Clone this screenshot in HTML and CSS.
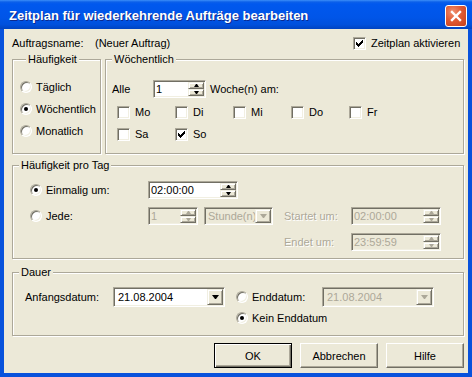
FILE: index.html
```html
<!doctype html>
<html lang="de">
	<head>
		<meta charset="utf-8" />
		<title>Zeitplan für wiederkehrende Aufträge bearbeiten</title>
		<link rel="stylesheet" href="styles.css">
	</head>

	<body>
		<div class="window">
			<div class="titlebar">
				<span class="title">Zeitplan für wiederkehrende Aufträge bearbeiten</span>
				<a class="close-button">
					<svg width="12" height="12" viewBox="0 0 12 12"><path d="M2 2 L10 10 M10 2 L2 10" stroke="#fff" stroke-width="2.4" stroke-linecap="square" /></svg>
				</a>
			</div>

			<div class="client">
				<!-- Kopfzeile -->
				<div class="top-row">
					<span class="job-label">Auftragsname:</span>
					<span class="job-name">(Neuer Auftrag)</span>
					<label class="check">
						<span class="box"><svg width="7" height="7" viewBox="0 0 7 7"><path d="M0 2h1v1h1v1h1v-1h1v-1h1v-1h1v-1h1v3h-1v1h-1v1h-1v1h-1v1h-1v-1h-1v-1h-1z" /></svg></span>
						Zeitplan aktivieren
					</label>
				</div>

				<!-- Häufigkeit / Wöchentlich -->
				<div class="group-row">
					<div class="group frequency">
						<span class="group-title">Häufigkeit</span>
						<div class="radio-list">
							<label class="option"><span class="radio"></span>Täglich</label>
							<label class="option"><span class="radio checked"></span>Wöchentlich</label>
							<label class="option"><span class="radio"></span>Monatlich</label>
						</div>
					</div>

					<div class="group weekly">
						<span class="group-title">Wöchentlich</span>
						<div class="every-row">
							<span class="every-label">Alle</span>
							<span class="field spin week-spin">
								<span class="field-value">1</span>
								<span class="spin-buttons"><span class="raised arrow-up"></span><span class="raised arrow-down"></span></span>
							</span>
							<span class="every-suffix">Woche(n) am:</span>
						</div>
						<div class="day-grid">
							<label class="check"><span class="box"></span>Mo</label>
							<label class="check"><span class="box"></span>Di</label>
							<label class="check"><span class="box"></span>Mi</label>
							<label class="check"><span class="box"></span>Do</label>
							<label class="check"><span class="box"></span>Fr</label>
							<label class="check"><span class="box"></span>Sa</label>
							<label class="check">
								<span class="box"><svg width="7" height="7" viewBox="0 0 7 7"><path d="M0 2h1v1h1v1h1v-1h1v-1h1v-1h1v-1h1v3h-1v1h-1v1h-1v1h-1v1h-1v-1h-1v-1h-1z" /></svg></span>
								So
							</label>
						</div>
					</div>
				</div>

				<!-- Häufigkeit pro Tag -->
				<div class="group daily">
					<span class="group-title">Häufigkeit pro Tag</span>
					<div class="daily-row">
						<label class="option daily-option"><span class="radio checked"></span>Einmalig um:</label>
						<span class="field spin time-field">
							<span class="field-value">02:00:00</span>
							<span class="spin-buttons"><span class="raised arrow-up"></span><span class="raised arrow-down"></span></span>
						</span>
					</div>
					<div class="daily-row">
						<label class="option daily-option"><span class="radio"></span>Jede:</label>
						<span class="field spin disabled count-spin">
							<span class="field-value">1</span>
							<span class="spin-buttons"><span class="raised arrow-up"></span><span class="raised arrow-down"></span></span>
						</span>
						<span class="field combo disabled unit-combo">
							<span class="field-value">Stunde(n)</span>
							<span class="raised combo-button"></span>
						</span>
						<span class="time-label disabled-text">Startet um:</span>
						<span class="field spin disabled time-field">
							<span class="field-value">02:00:00</span>
							<span class="spin-buttons"><span class="raised arrow-up"></span><span class="raised arrow-down"></span></span>
						</span>
					</div>
					<div class="daily-row end-row">
						<span class="time-label disabled-text">Endet um:</span>
						<span class="field spin disabled time-field">
							<span class="field-value">23:59:59</span>
							<span class="spin-buttons"><span class="raised arrow-up"></span><span class="raised arrow-down"></span></span>
						</span>
					</div>
				</div>

				<!-- Dauer -->
				<div class="group duration">
					<span class="group-title">Dauer</span>
					<div class="duration-row">
						<span class="start-label">Anfangsdatum:</span>
						<span class="field combo date-combo">
							<span class="field-value">21.08.2004</span>
							<span class="raised combo-button"></span>
						</span>
						<label class="option end-option"><span class="radio"></span>Enddatum:</label>
						<span class="field combo disabled date-combo">
							<span class="field-value">21.08.2004</span>
							<span class="raised combo-button"></span>
						</span>
					</div>
					<div class="duration-row no-end-row">
						<label class="option"><span class="radio checked"></span>Kein Enddatum</label>
					</div>
				</div>

				<!-- Schaltflächen -->
				<div class="button-row">
					<button class="button default">OK</button>
					<button class="button">Abbrechen</button>
					<button class="button">Hilfe</button>
				</div>
			</div>
		</div>
	</body>
</html>
```

FILE: styles.css
```css
/* Allgemein */

body {
	margin: 0;
	font-family: "Liberation Sans", Arial, sans-serif;
	font-size: 11px;
	line-height: 14px;
	color: #000;
	background: #fff;
}

label {
	cursor: default;
}

.window {
	width: 472px;
	height: 377px;
	display: flex;
	flex-direction: column;
}

/* Titelleiste */

.titlebar {
	flex: none;
	height: 29px;
	box-sizing: border-box;
	display: flex;
	align-items: center;
	justify-content: space-between;
	padding: 2px 5px 0 9px;
	background: linear-gradient(to bottom, #3c8ef8 0, #0b5fe9 2px, #0058ee 4px, #0055e8 60%, #0050dc 85%, #0043c0 100%);
}

.title {
	color: #fff;
	font-size: 13px;
	font-weight: bold;
	text-shadow: 1px 1px #0c2a8f;
}

.close-button {
	display: flex;
	align-items: center;
	justify-content: center;
	width: 22px;
	height: 22px;
	box-sizing: border-box;
	border: 1px solid #fff;
	border-radius: 3px;
	background: radial-gradient(circle at 35% 30%, #f09272 0, #e05a34 45%, #c63f1b 100%);
}

/* Fensterinhalt */

.client {
	flex: 1;
	box-sizing: border-box;
	background: #ece9d8;
	border: 0 solid #0852dc;
	border-width: 0 4px 4px;
	padding: 7px 4px 0 8px;
}

.top-row {
	display: flex;
	align-items: center;
	height: 14px;
}

.job-label {
	width: 83px;
}

.job-name {
	width: 258px;
}

/* Gruppenrahmen (geätzte Linie) */

.group {
	box-sizing: border-box;
	display: flex;
	flex-direction: column;
	align-items: flex-start;
	border: 1px solid #aca899;
	box-shadow: inset 1px 1px #fff, 1px 1px #fff;
}

.group-title {
	margin: -8px 0 0 6px;
	padding: 0 2px;
	background: #ece9d8;
}

.group-row {
	display: flex;
	gap: 4px;
	margin-top: 9px;
	height: 95px;
}

.frequency {
	width: 89px;
	padding-left: 7px;
}

.weekly {
	flex: 1;
}

.radio-list {
	display: flex;
	flex-direction: column;
	gap: 8px;
	margin-top: 14px;
}

/* Optionsfelder und Kontrollkästchen */

.option,
.check {
	display: flex;
	align-items: center;
	height: 14px;
	white-space: nowrap;
}

.radio {
	flex: none;
	display: flex;
	align-items: center;
	justify-content: center;
	width: 12px;
	height: 12px;
	box-sizing: border-box;
	margin-right: 4px;
	border-radius: 50%;
	border: 1px solid;
	border-color: #aca899 #fff #fff #aca899;
	box-shadow: inset 1px 1px #716f64, inset -1px -1px #f1efe2;
	background: #fff;
}

.radio.checked::after {
	content: "";
	width: 4px;
	height: 4px;
	border-radius: 50%;
	background: #000;
}

.box {
	flex: none;
	display: flex;
	align-items: center;
	justify-content: center;
	width: 13px;
	height: 13px;
	box-sizing: border-box;
	margin-right: 5px;
	border: 1px solid;
	border-color: #aca899 #fff #fff #aca899;
	box-shadow: inset 1px 1px #716f64, inset -1px -1px #f1efe2;
	background: #fff;
}

.box svg {
	fill: #000;
}

/* Wöchentlich */

.every-row {
	display: flex;
	align-items: center;
	margin-top: 14px;
	padding-left: 6px;
}

.every-label {
	width: 41px;
}

.week-spin {
	width: 53px;
}

.every-suffix {
	margin-left: 4px;
}

.day-grid {
	display: grid;
	grid-template-columns: repeat(5, 58px);
	row-gap: 8px;
	margin-top: 7px;
	padding-left: 11px;
}

/* Eingabefelder */

.field {
	display: flex;
	height: 18px;
	box-sizing: border-box;
	padding: 1px;
	border: 1px solid;
	border-color: #aca899 #fff #fff #aca899;
	box-shadow: inset 1px 1px #716f64, inset -1px -1px #f1efe2;
	background: #fff;
}

.field-value {
	flex: 1;
	padding-left: 1px;
	line-height: 14px;
	overflow: hidden;
	white-space: nowrap;
}

.field.disabled {
	background: #ece9d8;
	color: #aca899;
}

.raised {
	box-sizing: border-box;
	display: flex;
	align-items: center;
	justify-content: center;
	border: 1px solid;
	border-color: #f1efe2 #716f64 #716f64 #f1efe2;
	box-shadow: inset 1px 1px #fff, inset -1px -1px #aca899;
	background: #ece9d8;
}

.spin-buttons {
	display: flex;
	flex-direction: column;
	width: 16px;
}

.spin-buttons .raised {
	flex: 1;
}

.arrow-up::after,
.arrow-down::after {
	content: "";
	width: 1px;
	border-left: 2px solid transparent;
	border-right: 2px solid transparent;
}

.arrow-up::after {
	border-bottom: 3px solid #000;
}

.arrow-down::after {
	border-top: 3px solid #000;
}

.combo-button {
	width: 16px;
}

.combo-button::after {
	content: "";
	width: 1px;
	border-left: 3px solid transparent;
	border-right: 3px solid transparent;
	border-top: 4px solid #000;
}

.disabled .arrow-up::after {
	border-bottom-color: #aca899;
}

.disabled .arrow-down::after,
.disabled .combo-button::after {
	border-top-color: #aca899;
}

.disabled-text {
	color: #aca899;
	text-shadow: 1px 1px #fff;
}

/* Häufigkeit pro Tag */

.daily {
	margin-top: 11px;
	height: 94px;
	padding-left: 17px;
}

.daily .group-title {
	margin-left: -11px;
}

.daily-row {
	display: flex;
	align-items: center;
	margin-top: 8px;
}

.daily-row:first-of-type {
	margin-top: 9px;
}

.daily-option {
	width: 118px;
}

.time-field {
	width: 90px;
}

.count-spin {
	width: 50px;
}

.unit-combo {
	width: 69px;
	margin-left: 6px;
}

.unit-combo .field-value {
	padding-left: 2px;
}

.time-label {
	width: 67px;
	margin-left: 11px;
}

.end-row {
	padding-left: 243px;
}

/* Dauer */

.duration {
	margin-top: 13px;
	height: 64px;
	padding-left: 12px;
}

.duration .group-title {
	margin-left: -6px;
}

.duration-row {
	display: flex;
	align-items: center;
	margin-top: 8px;
}

.no-end-row {
	margin-top: 4px;
	padding-left: 211px;
}

.start-label {
	width: 88px;
}

.date-combo {
	width: 112px;
	height: 20px;
}

.date-combo .field-value {
	padding-left: 3px;
	line-height: 16px;
}

.end-option {
	width: 86px;
	margin-left: 11px;
}

/* Schaltflächen */

.button-row {
	display: flex;
	justify-content: flex-end;
	gap: 8px;
	margin-top: 7px;
}

.button {
	width: 78px;
	height: 25px;
	margin: 0;
	padding: 0;
	font: inherit;
	color: #000;
	border: 1px solid;
	border-color: #fff #716f64 #716f64 #fff;
	box-shadow: inset -1px -1px #aca899;
	background: #ece9d8;
}

.button.default {
	border-color: #000;
	box-shadow: inset 1px 1px #fff, inset -1px -1px #716f64, inset -2px -2px #aca899;
}
```
